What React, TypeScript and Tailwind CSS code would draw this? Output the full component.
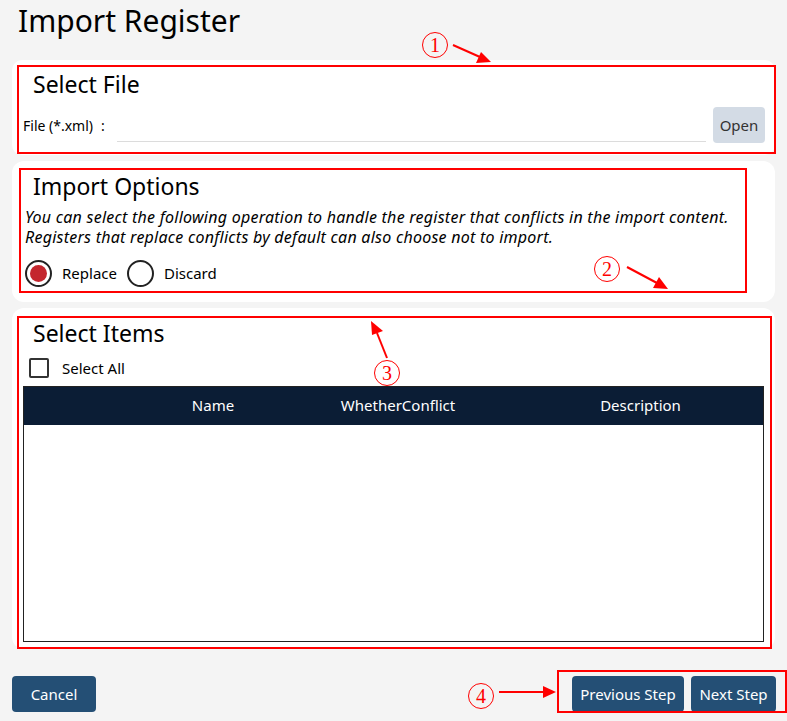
import { useState } from "react"

const font = { fontFamily: '"Noto Sans", "Open Sans", sans-serif' }

function Radio({ checked, label, onClick }: { checked: boolean; label: string; onClick: () => void }) {
  return (
    <button onClick={onClick} className="flex items-center gap-[10px]">
      <span className="flex h-[27px] w-[27px] items-center justify-center rounded-full border-2 border-[#222]">
        {checked && <span className="h-[17px] w-[17px] rounded-full bg-[#c4262e]" />}
      </span>
      <span className="text-[15px] text-black">{label}</span>
    </button>
  )
}

function Marker({ n }: { n: string }) {
  return (
    <span className="flex h-[26px] w-[26px] items-center justify-center rounded-full border border-[#ff0000] text-[20px] leading-none text-[#ff0000] [font-family:'Liberation_Serif',serif]">
      {n}
    </span>
  )
}

export default function App() {
  const [mode, setMode] = useState("replace")
  const [all, setAll] = useState(false)

  return (
    <div style={font} className="relative h-[721px] w-[787px] overflow-hidden bg-[#f4f4f4] text-black">
      {/* Title */}
      <h1 className="h-[60px] pl-[18px] pt-[1px] text-[30px] leading-[40px]">Import Register</h1>

      <div className="flex flex-col gap-[6px] px-[12px]">
        {/* Select File */}
        <section className="h-[95px] rounded-[10px] bg-white pl-[11px] pr-[10px] pt-[8px]">
          <h2 className="pl-[10px] text-[23px] leading-[32px]">Select File</h2>
          <div className="mt-[7px] flex items-center">
            <span className="w-[94px] text-[14px]">
              File (*.xml)<span className="ml-[8px]">:</span>
            </span>
            <input className="mt-[14px] h-[20px] flex-1 border-b border-[#dcdcdc] outline-none" />
            <button className="ml-[7px] h-[36px] w-[52px] rounded-[4px] bg-[#d3dbe5] text-[15px] text-[#333]">Open</button>
          </div>
        </section>

        {/* Import Options */}
        <section className="h-[141px] rounded-[12px] bg-white pl-[13px] pt-[9px]">
          <h2 className="pl-[8px] text-[23px] leading-[32px]">Import Options</h2>
          <p className="mt-[5px] text-[16px] italic leading-[20px] tracking-[0.25px]">
            You can select the following operation to handle the register that conflicts in the import content.
            <br />
            Registers that replace conflicts by default can also choose not to import.
          </p>
          <div className="mt-[13px] flex items-center gap-[10px]">
            <Radio checked={mode === "replace"} label="Replace" onClick={() => setMode("replace")} />
            <Radio checked={mode === "discard"} label="Discard" onClick={() => setMode("discard")} />
          </div>
        </section>

        {/* Select Items */}
        <section className="h-[341px] rounded-[12px] bg-white px-[11px] pt-[9px]">
          <h2 className="pl-[10px] text-[23px] leading-[32px]">Select Items</h2>
          <button onClick={() => setAll(!all)} className="mt-[8px] flex items-center gap-[13px] pl-[6px]">
            <span className="flex h-[20px] w-[20px] items-center justify-center rounded-[2px] border-2 border-[#333]">
              {all && <span className="h-[10px] w-[10px] bg-[#333]" />}
            </span>
            <span className="text-[15px]">Select All</span>
          </button>
          <div className="mt-[6px] flex h-[256px] flex-col border border-[#222]">
            <div className="flex h-[38px] items-center bg-[#0b1d35] text-[15px] text-white">
              <span className="w-[100px]" />
              <span className="w-[178px] text-center">Name</span>
              <span className="w-[192px] text-center">WhetherConflict</span>
              <span className="flex-1 pl-[24px] text-center">Description</span>
            </div>
            <div className="flex-1 bg-white" />
          </div>
        </section>
      </div>

      {/* Footer */}
      <div className="mt-[27px] flex items-center px-[12px]">
        <button className="h-[36px] w-[84px] rounded-[4px] bg-[#244f75] text-[15px] text-white">Cancel</button>
        <div className="ml-auto flex gap-[7px]">
          <button className="h-[36px] w-[112px] rounded-[4px] bg-[#244f75] text-[15px] text-white">Previous Step</button>
          <button className="mr-[-1px] h-[36px] w-[85px] rounded-[4px] bg-[#244f75] text-[15px] text-white">Next Step</button>
        </div>
      </div>

      {/* Annotation overlay */}
      <div className="pointer-events-none absolute left-[17px] top-[65px] h-[89px] w-[759px] border-2 border-[#ff0000]" />
      <div className="pointer-events-none absolute left-[19px] top-[168px] h-[125px] w-[728px] border-2 border-[#ff0000]" />
      <div className="pointer-events-none absolute left-[17px] top-[316px] h-[333px] w-[755px] border-2 border-[#ff0000]" />
      <div className="pointer-events-none absolute left-[557px] top-[670px] h-[43px] w-[230px] border-2 border-[#ff0000]" />

      <div className="absolute left-[422px] top-[32px]"><Marker n="1" /></div>
      <div className="absolute left-[594px] top-[256px]"><Marker n="2" /></div>
      <div className="absolute left-[374px] top-[360px]"><Marker n="3" /></div>
      <div className="absolute left-[468px] top-[683px]"><Marker n="4" /></div>

      <svg className="pointer-events-none absolute left-0 top-0" width="787" height="721">
        <g stroke="#ff0000" strokeWidth="2" fill="#ff0000">
          <line x1="453" y1="45" x2="480" y2="57" />
          <polygon points="491,62 476,63 481,52" stroke="none" />
          <line x1="627" y1="267" x2="657" y2="283" />
          <polygon points="668,289 653,288 659,277" stroke="none" />
          <line x1="387" y1="358" x2="377" y2="333" />
          <polygon points="371,321 383,331 372,335" stroke="none" />
          <line x1="499" y1="692" x2="543" y2="692" />
          <polygon points="556,692 543,686 543,698" stroke="none" />
        </g>
      </svg>
    </div>
  )
}
